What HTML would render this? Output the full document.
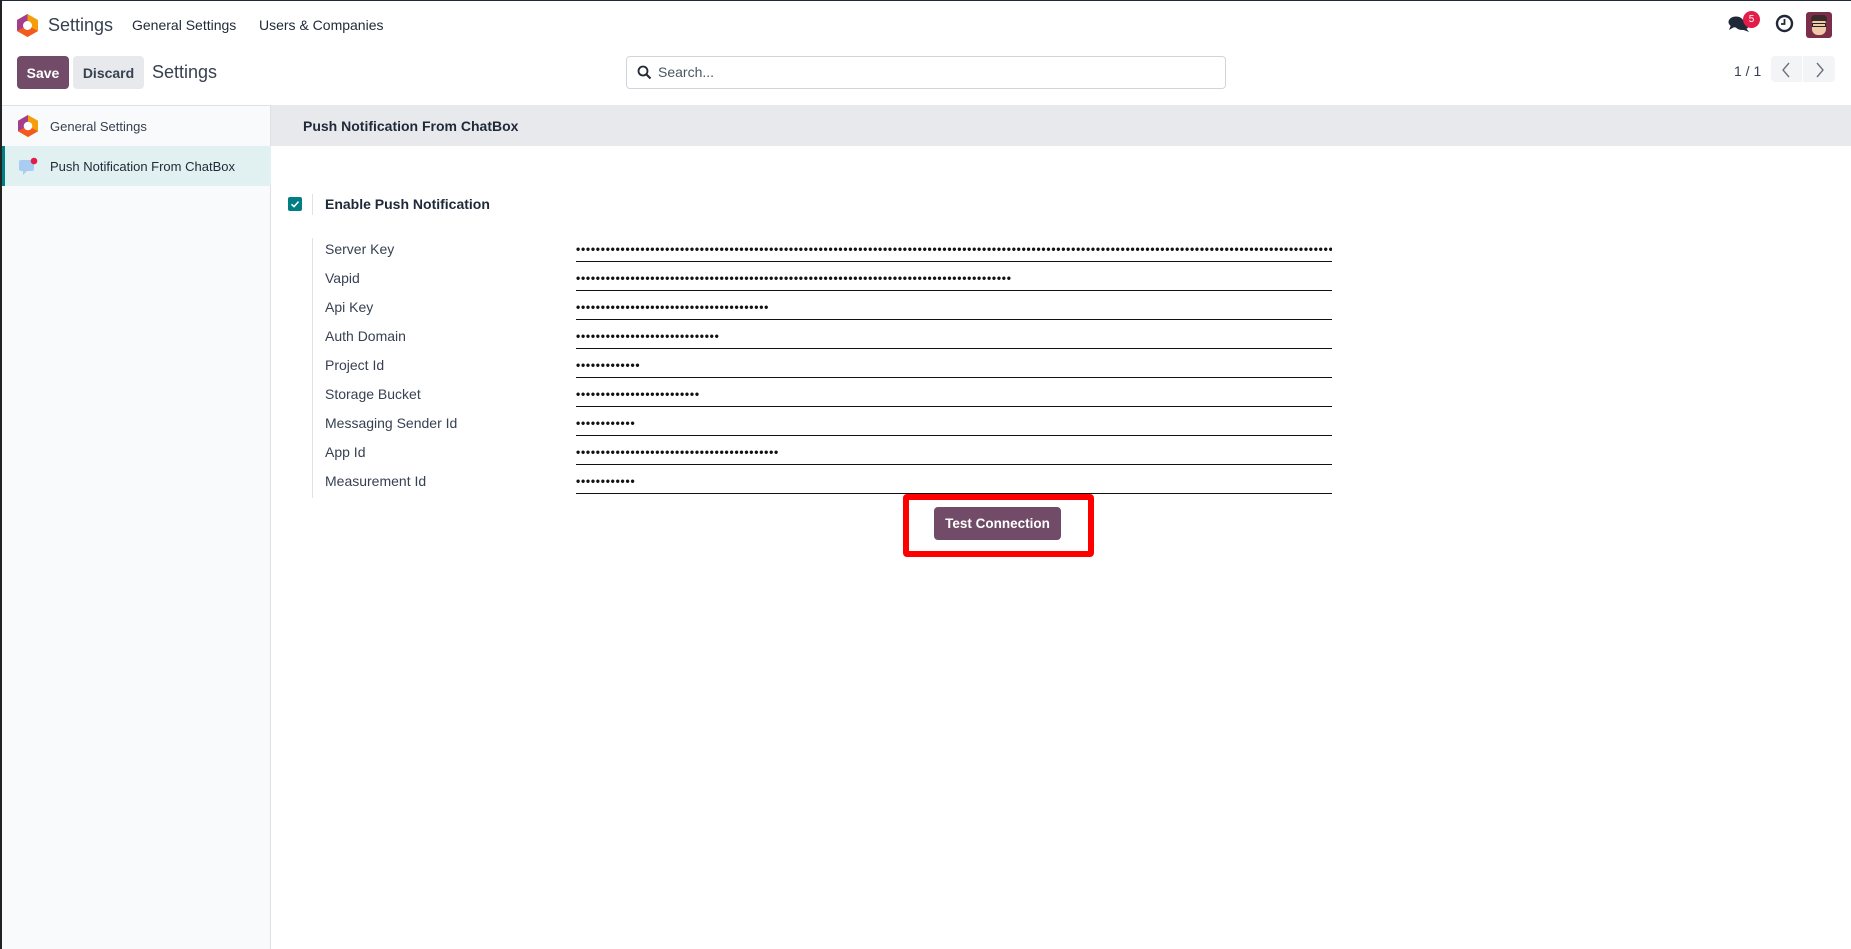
<!DOCTYPE html>
<html><head><meta charset="utf-8">
<style>
*{box-sizing:border-box;margin:0;padding:0}
html,body{width:1851px;height:949px;overflow:hidden;background:#fff;font-family:"Liberation Sans",sans-serif;color:#374151}
.abs{position:absolute}
.topline{left:0;top:0;width:1851px;height:1px;background:#1f2937}
.leftline{left:0;top:0;width:2px;height:949px;background:#222}
.btn{position:absolute;border-radius:4px;font-size:14px;font-weight:bold;display:flex;align-items:center;justify-content:center}
.dots{position:absolute;left:576px;font-size:12px;letter-spacing:0.75px;color:#111;white-space:nowrap;overflow:hidden;width:756px;line-height:12px;font-weight:bold}
.uline{position:absolute;left:576px;width:756px;height:1px;background:#111}
.lbl{position:absolute;left:325px;font-size:14px;color:#374151}
</style></head><body>
<div class="abs topline"></div>
<div class="abs leftline"></div>

<svg class="abs" style="left:17px;top:14px" width="21" height="23" viewBox="0 0 21 23">
<polygon points="10.5,0 21,6 21,17 10.5,23 0,17 0,6" fill="#f59e0b"/>
<polygon points="10.5,0 0,6 0,17 10.5,11.5" fill="#a43d8b"/>
<polygon points="0,17 10.5,23 21,17 10.5,11.5" fill="#f25a1f"/>
<circle cx="10.5" cy="11.5" r="4.5" fill="#fff"/>
</svg>
<div class="abs" style="left:48px;top:15px;font-size:18px;color:#374151">Settings</div>
<div class="abs" style="left:132px;top:17px;font-size:14px;color:#1f2937">General Settings</div>
<div class="abs" style="left:259px;top:17px;font-size:14px;color:#1f2937">Users &amp; Companies</div>

<svg class="abs" style="left:1728px;top:15px" width="22" height="18" viewBox="0 0 22 18">
<ellipse cx="8" cy="7" rx="7.5" ry="5.5" fill="#1f2937"/><polygon points="3,10 1,15 8,11" fill="#1f2937"/>
<ellipse cx="14" cy="10" rx="7" ry="5" fill="#1f2937"/><polygon points="18,13 21,17 13,14" fill="#1f2937"/>
</svg>
<div class="abs" style="left:1743px;top:11px;width:17px;height:17px;border-radius:50%;background:#e11d48;color:#fff;font-size:10px;text-align:center;line-height:17px">5</div>
<svg class="abs" style="left:1775px;top:14px" width="19" height="19" viewBox="0 0 19 19"><circle cx="9.5" cy="9.5" r="7.5" fill="none" stroke="#1f2937" stroke-width="2.4"/><path d="M9.5 5V10H6" fill="none" stroke="#1f2937" stroke-width="1.8"/></svg>
<div class="abs" style="left:1806px;top:12px;width:26px;height:26px;border-radius:3px;background:#7a2e4a;overflow:hidden">
<div class="abs" style="left:6px;top:6px;width:14px;height:17px;border-radius:6px;background:#f2c9a8"></div>
<div class="abs" style="left:5px;top:3px;width:16px;height:6px;border-radius:4px 4px 0 0;background:#3b2a2a"></div>
<div class="abs" style="left:6px;top:11px;width:14px;height:4px;border:1px solid #222"></div>
</div>

<div class="btn" style="left:17px;top:56px;width:52px;height:33px;background:#714b67;color:#fff">Save</div>
<div class="btn" style="left:73px;top:56px;width:71px;height:33px;background:#e7e9ed;color:#374151">Discard</div>
<div class="abs" style="left:152px;top:62px;font-size:18px;color:#374151">Settings</div>
<div class="abs" style="left:626px;top:56px;width:600px;height:33px;border:1px solid #d1d5db;border-radius:4px"></div>
<svg class="abs" style="left:637px;top:65px" width="15" height="15" viewBox="0 0 15 15"><circle cx="6" cy="6" r="4.5" fill="none" stroke="#1f2937" stroke-width="1.8"/><path d="M9.5 9.5L13.5 13.5" stroke="#1f2937" stroke-width="2"/></svg>
<div class="abs" style="left:658px;top:64px;font-size:14px;color:#4b5563">Search...</div>
<div class="abs" style="left:1734px;top:63px;font-size:14px;color:#374151">1 / 1</div>
<div class="abs" style="left:1771px;top:56px;width:64px;height:26px;background:#f3f4f6;border-radius:4px"></div>
<div class="abs" style="left:1802px;top:56px;width:1px;height:26px;background:#fff"></div>
<svg class="abs" style="left:1780px;top:61px" width="48" height="18" viewBox="0 0 48 18"><path d="M9 2L3 9L9 16" fill="none" stroke="#6b7280" stroke-width="1.4"/><path d="M37 2L43 9L37 16" fill="none" stroke="#6b7280" stroke-width="1.4"/></svg>

<div class="abs" style="left:2px;top:105px;width:269px;height:844px;background:#f9fafb;border-right:1px solid #dee2e6;border-top:1px solid #dee2e6"></div>
<svg class="abs" style="left:18px;top:115px" width="20" height="22" viewBox="0 0 21 23">
<polygon points="10.5,0 21,6 21,17 10.5,23 0,17 0,6" fill="#f59e0b"/>
<polygon points="10.5,0 0,6 0,17 10.5,11.5" fill="#a43d8b"/>
<polygon points="0,17 10.5,23 21,17 10.5,11.5" fill="#f25a1f"/>
<circle cx="10.5" cy="11.5" r="4.5" fill="#fff"/>
</svg>
<div class="abs" style="left:50px;top:119px;font-size:13px;color:#374151">General Settings</div>
<div class="abs" style="left:2px;top:146px;width:269px;height:40px;background:#e1f0f0;border-left:3px solid #017e84"></div>
<svg class="abs" style="left:19px;top:157px" width="20" height="19" viewBox="0 0 20 19"><rect x="0" y="3" width="15" height="11" rx="2" fill="#a8cdf0"/><polygon points="4,14 4,18 8,14" fill="#a8cdf0"/><circle cx="15" cy="4" r="3.3" fill="#e11d48"/></svg>
<div class="abs" style="left:50px;top:159px;font-size:13px;color:#1f2937">Push Notification From ChatBox</div>

<div class="abs" style="left:271px;top:105px;width:1580px;height:41px;background:#e7e9ed"></div>
<div class="abs" style="left:303px;top:118px;font-size:14px;font-weight:bold;color:#1f2937">Push Notification From ChatBox</div>

<div class="abs" style="left:288px;top:197px;width:14px;height:14px;background:#017e84;border-radius:2px"></div>
<svg class="abs" style="left:288px;top:197px" width="14" height="14" viewBox="0 0 14 14"><path d="M3.5 7.3L6 9.6L10.5 4.6" fill="none" stroke="#fff" stroke-width="1.6"/></svg>
<div class="abs" style="left:312px;top:194px;width:1px;height:21px;background:#dee2e6"></div>
<div class="abs" style="left:325px;top:196px;font-size:14px;font-weight:bold;color:#1f2937">Enable Push Notification</div>

<div class="abs" style="left:312px;top:238px;width:1px;height:260px;background:#dee2e6"></div>

<div class="lbl" style="top:241px">Server Key</div>
<div class="lbl" style="top:270px">Vapid</div>
<div class="lbl" style="top:299px">Api Key</div>
<div class="lbl" style="top:328px">Auth Domain</div>
<div class="lbl" style="top:357px">Project Id</div>
<div class="lbl" style="top:386px">Storage Bucket</div>
<div class="lbl" style="top:415px">Messaging Sender Id</div>
<div class="lbl" style="top:444px">App Id</div>
<div class="lbl" style="top:473px">Measurement Id</div>

<div class="dots" style="top:243px">•••••••••••••••••••••••••••••••••••••••••••••••••••••••••••••••••••••••••••••••••••••••••••••••••••••••••••••••••••••••••••••••••••••••••••••••••••••••••••••</div>
<div class="uline" style="top:261px"></div>
<div class="dots" style="top:272px">••••••••••••••••••••••••••••••••••••••••••••••••••••••••••••••••••••••••••••••••••••••••</div>
<div class="uline" style="top:290px"></div>
<div class="dots" style="top:301px">•••••••••••••••••••••••••••••••••••••••</div>
<div class="uline" style="top:319px"></div>
<div class="dots" style="top:330px">•••••••••••••••••••••••••••••</div>
<div class="uline" style="top:348px"></div>
<div class="dots" style="top:359px">•••••••••••••</div>
<div class="uline" style="top:377px"></div>
<div class="dots" style="top:388px">•••••••••••••••••••••••••</div>
<div class="uline" style="top:406px"></div>
<div class="dots" style="top:417px">••••••••••••</div>
<div class="uline" style="top:435px"></div>
<div class="dots" style="top:446px">•••••••••••••••••••••••••••••••••••••••••</div>
<div class="uline" style="top:464px"></div>
<div class="dots" style="top:475px">••••••••••••</div>
<div class="uline" style="top:493px"></div>

<div class="btn" style="left:934px;top:507px;width:127px;height:33px;background:#714b67;color:#fff;font-size:13.5px">Test Connection</div>
<div class="abs" style="left:903px;top:494px;width:191px;height:63px;border:6px solid #ff0000;border-radius:4px"></div>
</body></html>
